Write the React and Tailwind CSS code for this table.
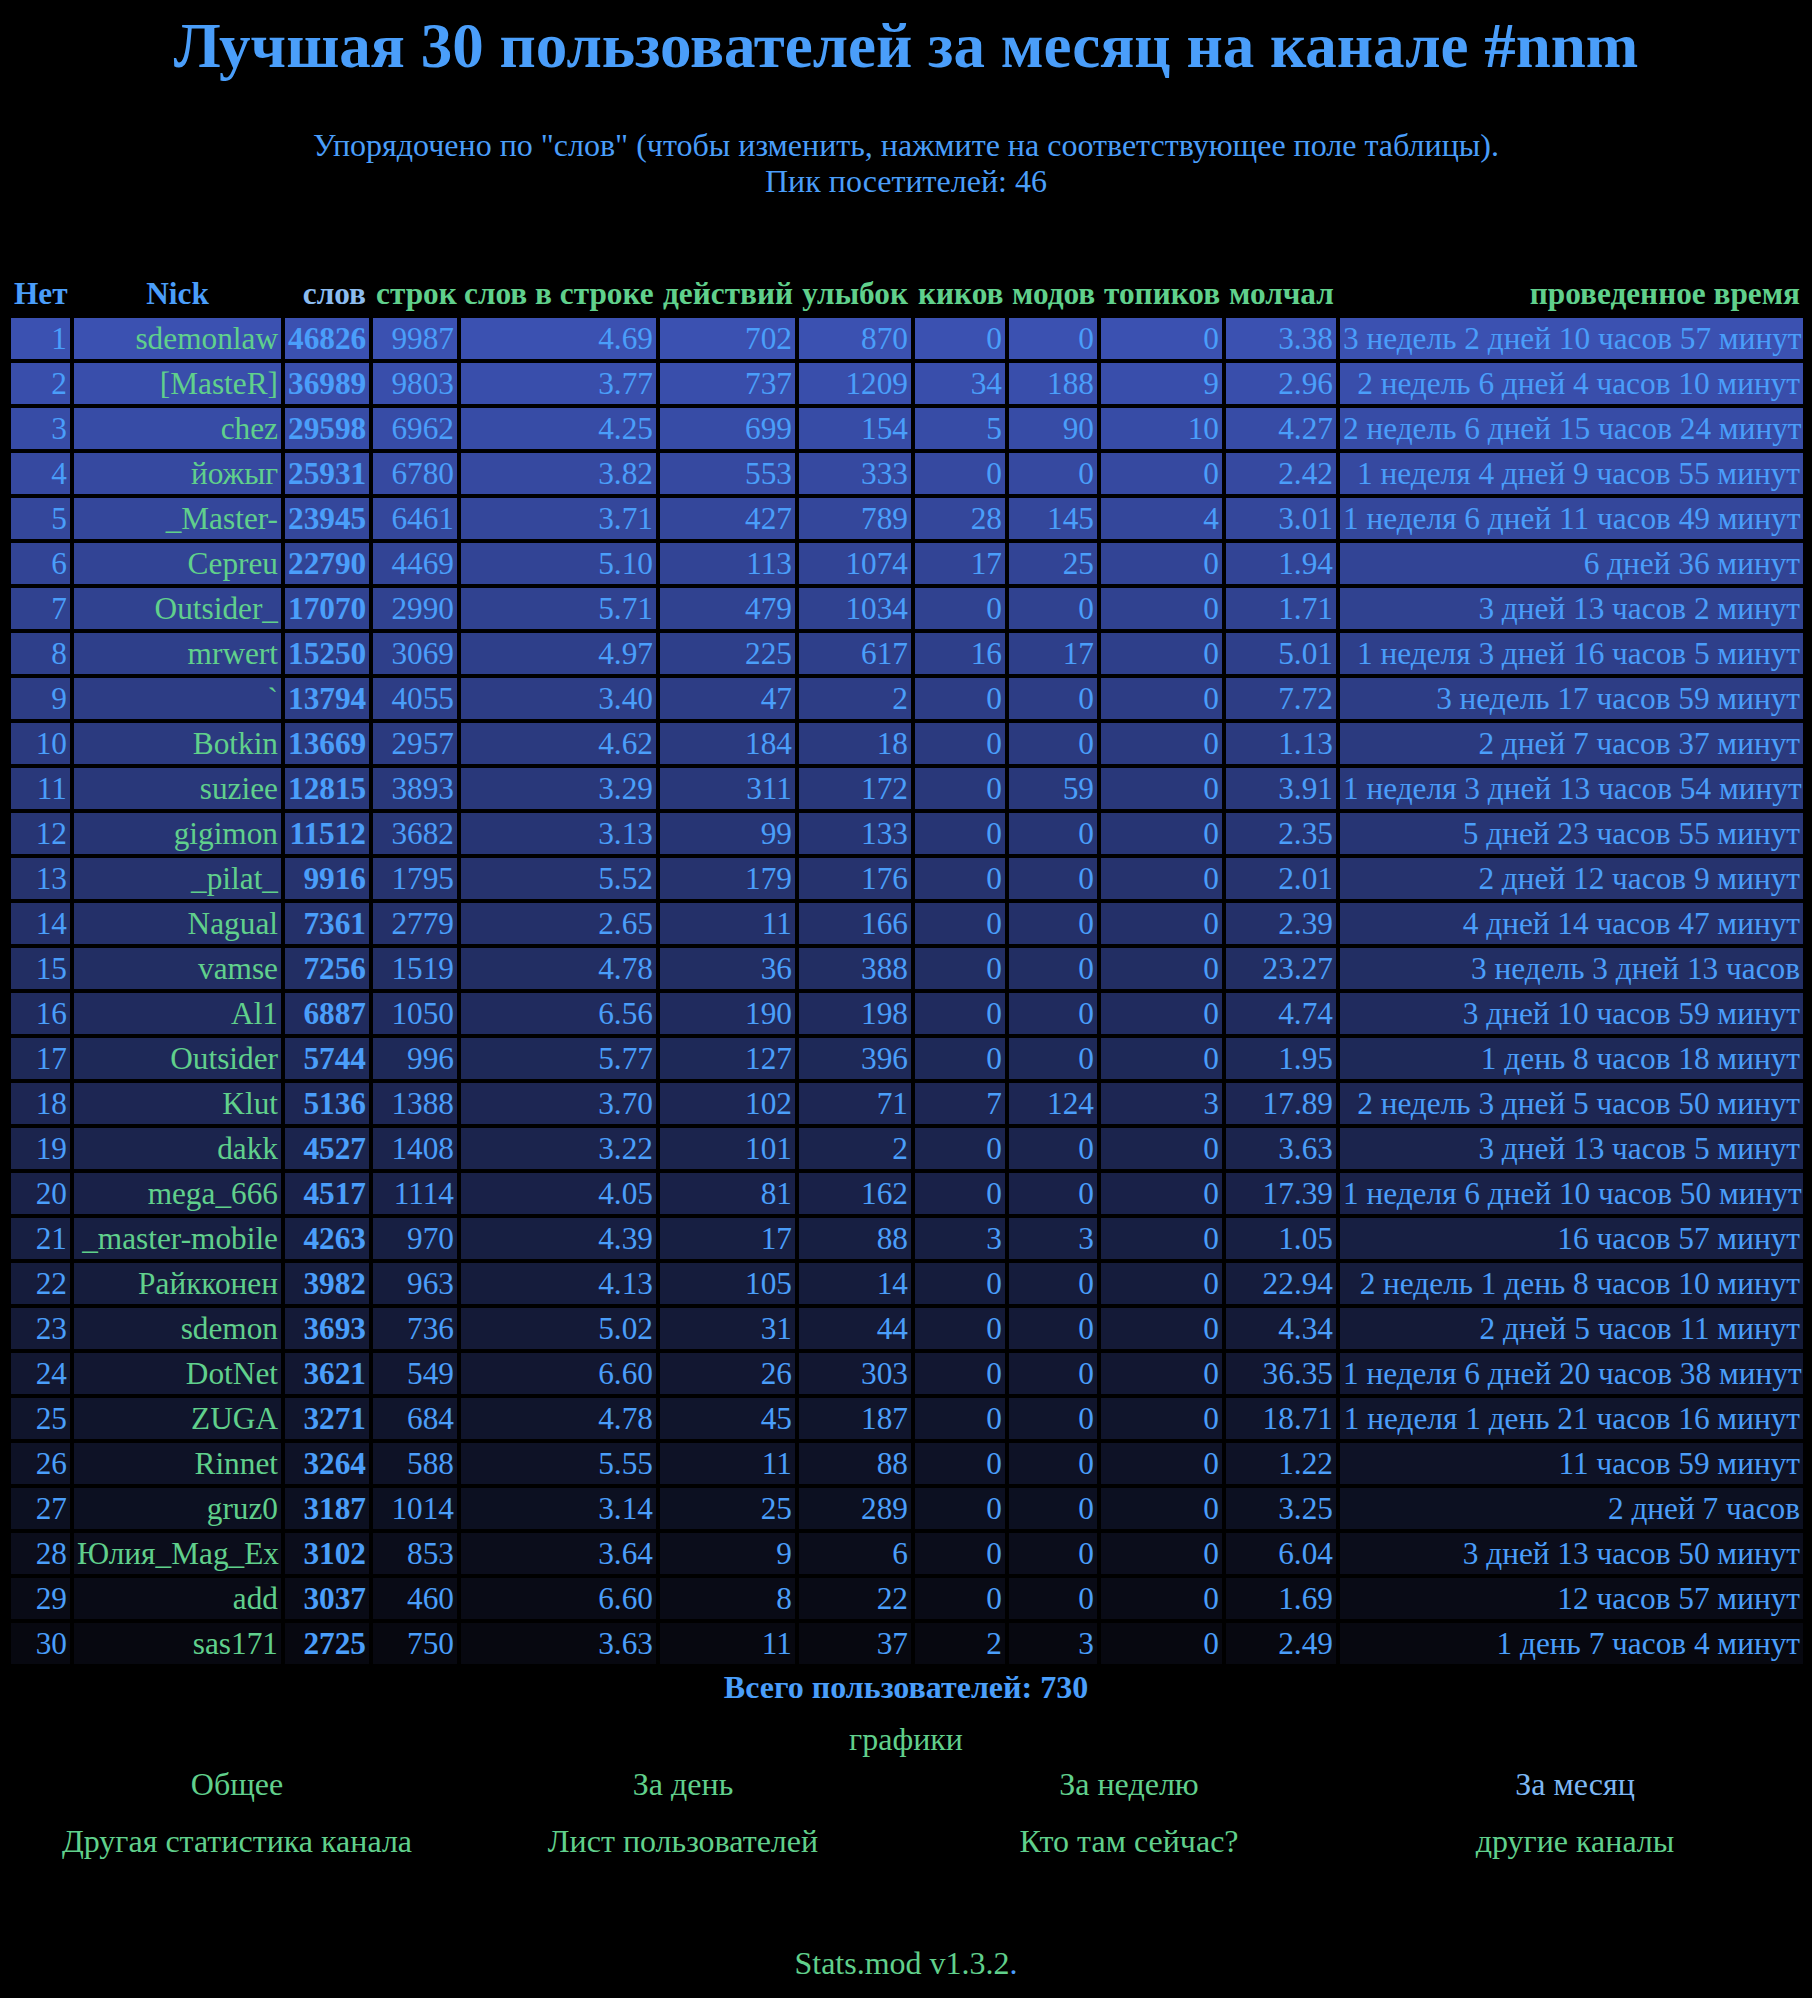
const rows = [
  ["sdemonlaw", 46826, 9987, "4.69", 702, 870, 0, 0, 0, "3.38", "3 недель 2 дней 10 часов 57 минут"],
  ["[MasteR]", 36989, 9803, "3.77", 737, 1209, 34, 188, 9, "2.96", "2 недель 6 дней 4 часов 10 минут"],
  ["chez", 29598, 6962, "4.25", 699, 154, 5, 90, 10, "4.27", "2 недель 6 дней 15 часов 24 минут"],
  ["йожыг", 25931, 6780, "3.82", 553, 333, 0, 0, 0, "2.42", "1 неделя 4 дней 9 часов 55 минут"],
  ["_Master-", 23945, 6461, "3.71", 427, 789, 28, 145, 4, "3.01", "1 неделя 6 дней 11 часов 49 минут"],
  ["Cepreu", 22790, 4469, "5.10", 113, 1074, 17, 25, 0, "1.94", "6 дней 36 минут"],
  ["Outsider_", 17070, 2990, "5.71", 479, 1034, 0, 0, 0, "1.71", "3 дней 13 часов 2 минут"],
  ["mrwert", 15250, 3069, "4.97", 225, 617, 16, 17, 0, "5.01", "1 неделя 3 дней 16 часов 5 минут"],
  ["`", 13794, 4055, "3.40", 47, 2, 0, 0, 0, "7.72", "3 недель 17 часов 59 минут"],
  ["Botkin", 13669, 2957, "4.62", 184, 18, 0, 0, 0, "1.13", "2 дней 7 часов 37 минут"],
  ["suziee", 12815, 3893, "3.29", 311, 172, 0, 59, 0, "3.91", "1 неделя 3 дней 13 часов 54 минут"],
  ["gigimon", 11512, 3682, "3.13", 99, 133, 0, 0, 0, "2.35", "5 дней 23 часов 55 минут"],
  ["_pilat_", 9916, 1795, "5.52", 179, 176, 0, 0, 0, "2.01", "2 дней 12 часов 9 минут"],
  ["Nagual", 7361, 2779, "2.65", 11, 166, 0, 0, 0, "2.39", "4 дней 14 часов 47 минут"],
  ["vamse", 7256, 1519, "4.78", 36, 388, 0, 0, 0, "23.27", "3 недель 3 дней 13 часов"],
  ["Al1", 6887, 1050, "6.56", 190, 198, 0, 0, 0, "4.74", "3 дней 10 часов 59 минут"],
  ["Outsider", 5744, 996, "5.77", 127, 396, 0, 0, 0, "1.95", "1 день 8 часов 18 минут"],
  ["Klut", 5136, 1388, "3.70", 102, 71, 7, 124, 3, "17.89", "2 недель 3 дней 5 часов 50 минут"],
  ["dakk", 4527, 1408, "3.22", 101, 2, 0, 0, 0, "3.63", "3 дней 13 часов 5 минут"],
  ["mega_666", 4517, 1114, "4.05", 81, 162, 0, 0, 0, "17.39", "1 неделя 6 дней 10 часов 50 минут"],
  ["_master-mobile", 4263, 970, "4.39", 17, 88, 3, 3, 0, "1.05", "16 часов 57 минут"],
  ["Райкконен", 3982, 963, "4.13", 105, 14, 0, 0, 0, "22.94", "2 недель 1 день 8 часов 10 минут"],
  ["sdemon", 3693, 736, "5.02", 31, 44, 0, 0, 0, "4.34", "2 дней 5 часов 11 минут"],
  ["DotNet", 3621, 549, "6.60", 26, 303, 0, 0, 0, "36.35", "1 неделя 6 дней 20 часов 38 минут"],
  ["ZUGA", 3271, 684, "4.78", 45, 187, 0, 0, 0, "18.71", "1 неделя 1 день 21 часов 16 минут"],
  ["Rinnet", 3264, 588, "5.55", 11, 88, 0, 0, 0, "1.22", "11 часов 59 минут"],
  ["gruz0", 3187, 1014, "3.14", 25, 289, 0, 0, 0, "3.25", "2 дней 7 часов"],
  ["Юлия_Mag_Ex", 3102, 853, "3.64", 9, 6, 0, 0, 0, "6.04", "3 дней 13 часов 50 минут"],
  ["add", 3037, 460, "6.60", 8, 22, 0, 0, 0, "1.69", "12 часов 57 минут"],
  ["sas171", 2725, 750, "3.63", 11, 37, 2, 3, 0, "2.49", "1 день 7 часов 4 минут"],
];

// row shading, light blue at the top fading to near black
const shades = [
  "bg-[#3b51b1]", "bg-[#394eab]", "bg-[#374ca6]", "bg-[#3649a0]", "bg-[#34479b]",
  "bg-[#324495]", "bg-[#304290]", "bg-[#2e3f8a]", "bg-[#2d3d85]", "bg-[#2b3a7f]",
  "bg-[#29387a]", "bg-[#273574]", "bg-[#26336e]", "bg-[#243069]", "bg-[#222e63]",
  "bg-[#202b5e]", "bg-[#1e2958]", "bg-[#1d2653]", "bg-[#1b244d]", "bg-[#192148]",
  "bg-[#171f42]", "bg-[#151c3c]", "bg-[#141a37]", "bg-[#121731]", "bg-[#10152c]",
  "bg-[#0e1226]", "bg-[#0c1021]", "bg-[#0b0d1b]", "bg-[#090b16]", "bg-[#070810]",
];

const headers = [
  { label: "Нет", w: "w-[59px]", cls: "text-[#4a9efa] text-center" },
  { label: "Nick", w: "w-[207px]", cls: "text-[#4a9efa] text-center" },
  { label: "слов", w: "w-[84px]", cls: "text-[#8cbcf0] text-right" },
  { label: "строк", w: "w-[84px]", cls: "text-[#60d08c] text-right" },
  { label: "слов в строке", w: "w-[195px]", cls: "text-[#60d08c] text-right" },
  { label: "действий", w: "w-[135px]", cls: "text-[#60d08c] text-right" },
  { label: "улыбок", w: "w-[112px]", cls: "text-[#60d08c] text-right" },
  { label: "киков", w: "w-[90px]", cls: "text-[#60d08c] text-right" },
  { label: "модов", w: "w-[88px]", cls: "text-[#60d08c] text-right" },
  { label: "топиков", w: "w-[121px]", cls: "text-[#60d08c] text-right" },
  { label: "молчал", w: "w-[110px]", cls: "text-[#60d08c] text-right" },
  { label: "проведенное время", w: "w-[463px]", cls: "text-[#60d08c] text-right" },
];

const cell = "px-[3px] py-[3px] text-right whitespace-nowrap";

export default function App() {
  return (
    <div
      className="min-h-screen bg-black text-[32px] leading-[36px] text-[#4a9efa]"
      style={{ fontFamily: '"Liberation Serif", "Times New Roman", serif' }}
    >
      <h1 className="pt-[11px] text-center text-[63px] leading-[71px] font-bold">
        Лучшая 30 пользователей за месяц на канале #nnm
      </h1>

      <div className="mt-[45px] text-center">
        <p>Упорядочено по "слов" (чтобы изменить, нажмите на соответствующее поле таблицы).</p>
        <p>Пик посетителей: 46</p>
      </div>

      <div className="mt-[70px] px-[7px]">
        <table className="w-[1800px] table-fixed border-separate border-spacing-[4px] text-[31.3px] leading-[35px]">
          <thead>
            <tr>
              {headers.map((h) => (
                <th key={h.label} className={`${h.w} ${h.cls} px-[3px] py-[3px] font-bold whitespace-nowrap`}>
                  {h.label}
                </th>
              ))}
            </tr>
          </thead>
          <tbody>
            {rows.map((r, i) => (
              <tr key={i}>
                <td className={`${cell} ${shades[i]}`}>{i + 1}</td>
                <td className={`${cell} ${shades[i]} text-[#60d08c]`}>{r[0]}</td>
                <td className={`${cell} ${shades[i]} font-bold`}>{r[1]}</td>
                {r.slice(2).map((v, j) => (
                  <td key={j} className={`${cell} ${shades[i]}`}>{v}</td>
                ))}
              </tr>
            ))}
          </tbody>
        </table>
      </div>

      <p className="mt-[1px] text-center font-bold">Всего пользователей: 730</p>

      <p className="mt-[16px] text-center text-[#60d08c]">графики</p>
      <div className="mx-[14px] mt-[9px] grid grid-cols-4 text-center text-[#60d08c]">
        <a>Общее</a>
        <a>За день</a>
        <a>За неделю</a>
        <a className="text-[#7db8f5]">За месяц</a>
      </div>
      <div className="mx-[14px] mt-[21px] grid grid-cols-4 text-center text-[#60d08c]">
        <a>Другая статистика канала</a>
        <a>Лист пользователей</a>
        <a>Кто там сейчас?</a>
        <a>другие каналы</a>
      </div>

      <p className="mt-[86px] pb-[22px] text-center text-[#60d08c]">
        Stats.mod v1.3.2<span className="text-[#4a9efa]">.</span>
      </p>
    </div>
  );
}
